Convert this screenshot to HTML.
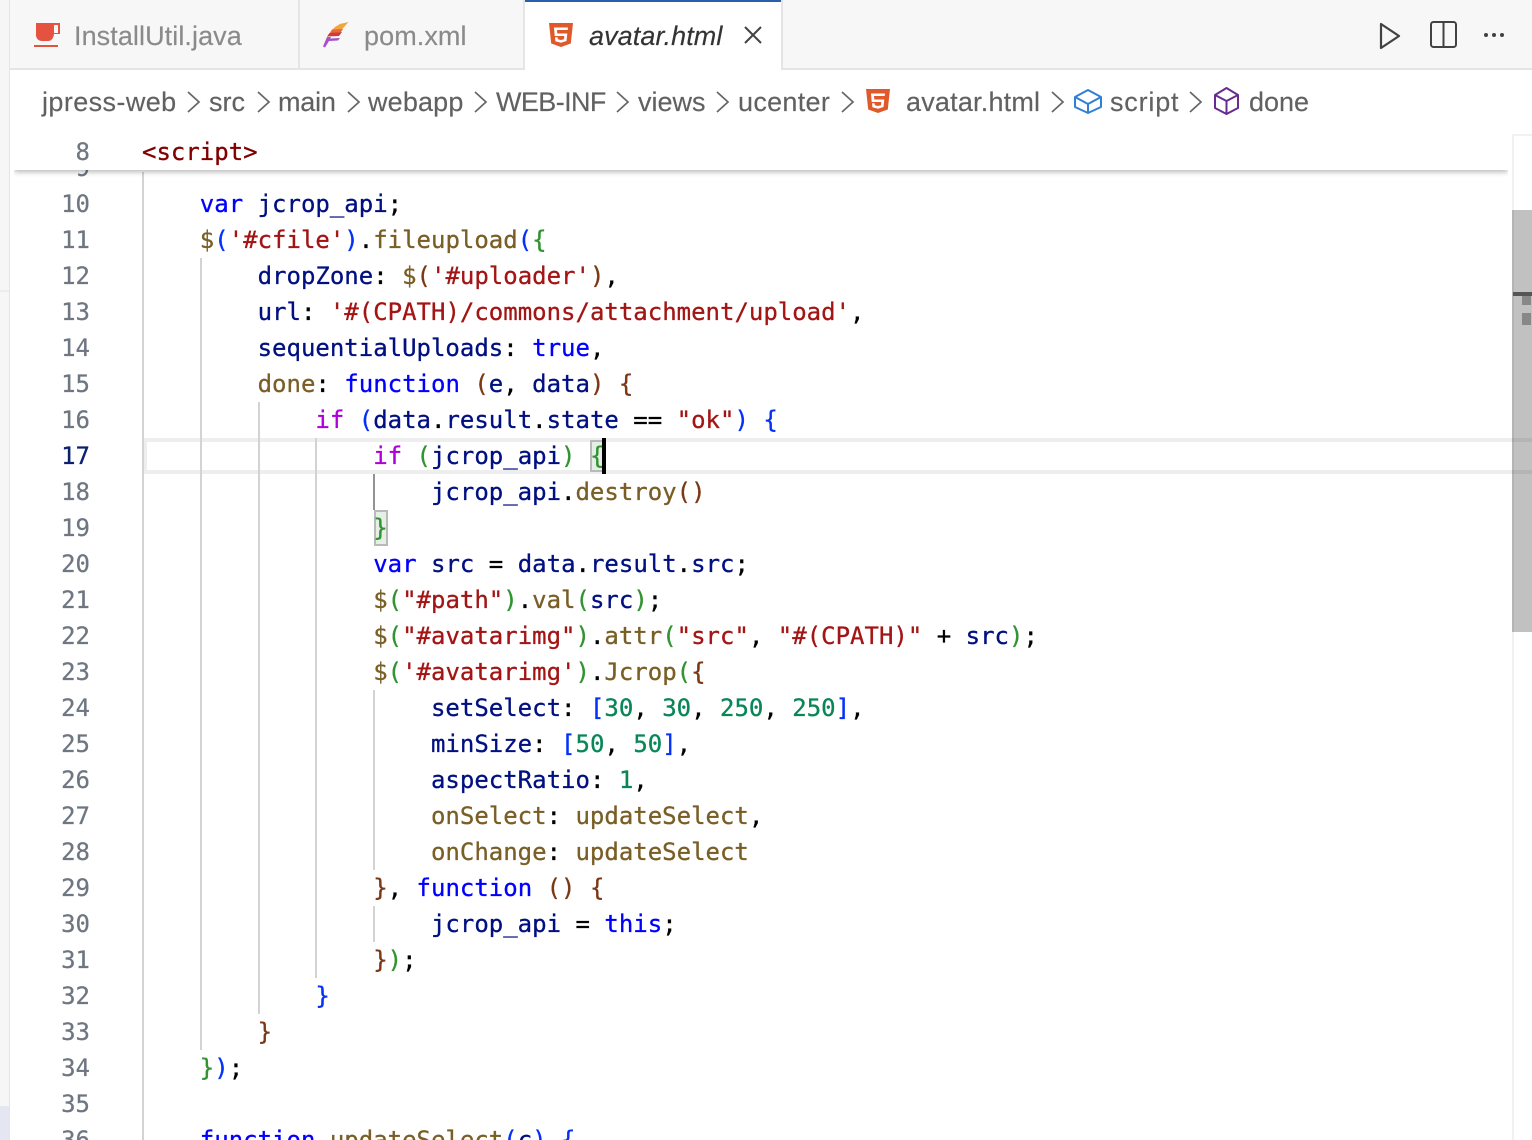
<!DOCTYPE html>
<html><head><meta charset="utf-8"><style>
html,body{margin:0;padding:0;width:1532px;height:1140px;overflow:hidden;background:#fff}
body{position:relative}
.a{position:absolute}
.ui{position:absolute;font-family:"Liberation Sans",sans-serif;font-size:27px;line-height:36px;white-space:nowrap;-webkit-text-stroke:.15px currentColor}
.bc{color:#616161;top:84px}
.tb{top:18px;color:#8a8a8a;letter-spacing:.08px}
.ln{position:absolute;left:30px;width:60px;text-align:right;font-family:"DejaVu Sans Mono",monospace;font-size:24px;line-height:36px;color:#6e7681;height:36px;-webkit-text-stroke:.25px currentColor;filter:blur(.25px)}
.c{position:absolute;left:142px;font-family:"DejaVu Sans Mono",monospace;font-size:24px;line-height:36px;height:36px;white-space:pre;color:#000;-webkit-text-stroke:.3px currentColor;filter:blur(.25px)}
.k{color:#00f}.p{color:#af00db}.s{color:#a31515}.f{color:#795e26}.v{color:#001080}.n{color:#098658}.t{color:#800000}
.b1{color:#0431fa}.b2{color:#319331}.b3{color:#7b3814}
.g{position:absolute;width:2px;background:#d3d3d3}
svg{position:absolute;overflow:visible}
</style></head><body>

<!-- left sidebar -->
<div class="a" style="left:0;top:0;width:9px;height:1140px;background:#f6f6f6"></div>
<div class="a" style="left:9px;top:0;width:1px;height:1140px;background:#e5e5e5"></div>
<div class="a" style="left:0;top:290px;width:9px;height:2px;background:#ececec"></div>
<div class="a" style="left:0;top:1106px;width:9px;height:34px;background:#e4e6f1"></div>

<!-- scrollbar -->
<div class="a" style="left:1512px;top:134px;width:20px;height:1006px;background:#fff;border-left:2px solid #f1f1f1;box-sizing:border-box;border-top:2px solid #f1f1f1"></div>
<div class="a" style="left:1512px;top:210px;width:20px;height:422px;background:#c1c1c1;border-left:2px solid #b4b4b4;box-sizing:border-box"></div>

<!-- current line -->
<div class="a" style="left:144px;top:438px;width:1388px;height:36px;box-sizing:border-box;border:4px solid #eeeeee;border-left-width:3px;border-right:0;mix-blend-mode:multiply"></div>

<!-- bracket highlights -->
<div class="a" style="left:590px;top:440px;width:14px;height:32px;box-sizing:border-box;background:#e6efe6;border:2px solid #b9b9b9"></div>
<div class="a" style="left:374px;top:510px;width:14px;height:36px;box-sizing:border-box;background:#e6efe6;border:2px solid #b9b9b9"></div>

<!-- indent guides -->
<div class="g" style="left:142px;top:172px;height:968px"></div>
<div class="g" style="left:200px;top:258px;height:792px"></div>
<div class="g" style="left:258px;top:402px;height:612px"></div>
<div class="g" style="left:315px;top:438px;height:540px"></div>
<div class="g" style="left:373px;top:474px;height:36px;background:#939393"></div>
<div class="g" style="left:373px;top:690px;height:180px"></div>
<div class="g" style="left:373px;top:906px;height:36px"></div>

<!-- scrollbar marks -->
<div class="a" style="left:1513px;top:292px;width:19px;height:4px;background:#555"></div>
<div class="a" style="left:1522px;top:296px;width:9px;height:9px;background:#888"></div>
<div class="a" style="left:1522px;top:313px;width:9px;height:12px;background:#888"></div>

<!-- line numbers -->
<div class="ln" style="top:150px">9</div>
<div class="ln" style="top:186px">10</div>
<div class="ln" style="top:222px">11</div>
<div class="ln" style="top:258px">12</div>
<div class="ln" style="top:294px">13</div>
<div class="ln" style="top:330px">14</div>
<div class="ln" style="top:366px">15</div>
<div class="ln" style="top:402px">16</div>
<div class="ln" style="top:438px;color:#0b216f">17</div>
<div class="ln" style="top:474px">18</div>
<div class="ln" style="top:510px">19</div>
<div class="ln" style="top:546px">20</div>
<div class="ln" style="top:582px">21</div>
<div class="ln" style="top:618px">22</div>
<div class="ln" style="top:654px">23</div>
<div class="ln" style="top:690px">24</div>
<div class="ln" style="top:726px">25</div>
<div class="ln" style="top:762px">26</div>
<div class="ln" style="top:798px">27</div>
<div class="ln" style="top:834px">28</div>
<div class="ln" style="top:870px">29</div>
<div class="ln" style="top:906px">30</div>
<div class="ln" style="top:942px">31</div>
<div class="ln" style="top:978px">32</div>
<div class="ln" style="top:1014px">33</div>
<div class="ln" style="top:1050px">34</div>
<div class="ln" style="top:1086px">35</div>
<div class="ln" style="top:1122px">36</div>

<!-- code -->
<div class="c" style="top:186px">    <span class="k">var</span> <span class="v">jcrop_api</span>;</div>
<div class="c" style="top:222px">    <span class="f">$</span><span class="b1">(</span><span class="s">'#cfile'</span><span class="b1">)</span>.<span class="f">fileupload</span><span class="b1">(</span><span class="b2">{</span></div>
<div class="c" style="top:258px">        <span class="v">dropZone</span>: <span class="f">$</span><span class="b3">(</span><span class="s">'#uploader'</span><span class="b3">)</span>,</div>
<div class="c" style="top:294px">        <span class="v">url</span>: <span class="s">'#(CPATH)/commons/attachment/upload'</span>,</div>
<div class="c" style="top:330px">        <span class="v">sequentialUploads</span>: <span class="k">true</span>,</div>
<div class="c" style="top:366px">        <span class="f">done</span>: <span class="k">function</span> <span class="b3">(</span><span class="v">e</span>, <span class="v">data</span><span class="b3">)</span> <span class="b3">{</span></div>
<div class="c" style="top:402px">            <span class="p">if</span> <span class="b1">(</span><span class="v">data</span>.<span class="v">result</span>.<span class="v">state</span> == <span class="s">"ok"</span><span class="b1">)</span> <span class="b1">{</span></div>
<div class="c" style="top:438px">                <span class="p">if</span> <span class="b2">(</span><span class="v">jcrop_api</span><span class="b2">)</span> <span class="b2">{</span></div>
<div class="c" style="top:474px">                    <span class="v">jcrop_api</span>.<span class="f">destroy</span><span class="b3">()</span></div>
<div class="c" style="top:510px">                <span class="b2">}</span></div>
<div class="c" style="top:546px">                <span class="k">var</span> <span class="v">src</span> = <span class="v">data</span>.<span class="v">result</span>.<span class="v">src</span>;</div>
<div class="c" style="top:582px">                <span class="f">$</span><span class="b2">(</span><span class="s">"#path"</span><span class="b2">)</span>.<span class="f">val</span><span class="b2">(</span><span class="v">src</span><span class="b2">)</span>;</div>
<div class="c" style="top:618px">                <span class="f">$</span><span class="b2">(</span><span class="s">"#avatarimg"</span><span class="b2">)</span>.<span class="f">attr</span><span class="b2">(</span><span class="s">"src"</span>, <span class="s">"#(CPATH)"</span> + <span class="v">src</span><span class="b2">)</span>;</div>
<div class="c" style="top:654px">                <span class="f">$</span><span class="b2">(</span><span class="s">'#avatarimg'</span><span class="b2">)</span>.<span class="f">Jcrop</span><span class="b2">(</span><span class="b3">{</span></div>
<div class="c" style="top:690px">                    <span class="v">setSelect</span>: <span class="b1">[</span><span class="n">30</span>, <span class="n">30</span>, <span class="n">250</span>, <span class="n">250</span><span class="b1">]</span>,</div>
<div class="c" style="top:726px">                    <span class="v">minSize</span>: <span class="b1">[</span><span class="n">50</span>, <span class="n">50</span><span class="b1">]</span>,</div>
<div class="c" style="top:762px">                    <span class="v">aspectRatio</span>: <span class="n">1</span>,</div>
<div class="c" style="top:798px">                    <span class="f">onSelect</span>: <span class="f">updateSelect</span>,</div>
<div class="c" style="top:834px">                    <span class="f">onChange</span>: <span class="f">updateSelect</span></div>
<div class="c" style="top:870px">                <span class="b3">}</span>, <span class="k">function</span> <span class="b3">()</span> <span class="b3">{</span></div>
<div class="c" style="top:906px">                    <span class="v">jcrop_api</span> = <span class="k">this</span>;</div>
<div class="c" style="top:942px">                <span class="b3">}</span><span class="b2">)</span>;</div>
<div class="c" style="top:978px">            <span class="b1">}</span></div>
<div class="c" style="top:1014px">        <span class="b3">}</span></div>
<div class="c" style="top:1050px">    <span class="b2">}</span><span class="b1">)</span>;</div>
<div class="c" style="top:1122px">    <span class="k">function</span> <span class="f">updateSelect</span><span class="b1">(</span><span class="v">c</span><span class="b1">)</span> <span class="b1">{</span></div>

<!-- cursor -->
<div class="a" style="left:602px;top:438px;width:4px;height:36px;background:#000"></div>

<!-- sticky scroll + breadcrumbs -->
<div class="a" style="left:10px;top:70px;width:1502px;height:100px;background:#fff"></div>
<div class="a" style="left:14px;top:150px;width:1494px;height:20px;background:#fff;box-shadow:0 2px 5px rgba(0,0,0,.28);clip-path:inset(0 0 -12px 0)"></div>
<div class="ln" style="top:134px;color:#6e7681">8</div>
<div class="c" style="top:134px;color:#800000">&lt;script&gt;</div>

<!-- tab bar -->
<div class="a" style="left:10px;top:0;width:1522px;height:68px;background:#f7f7f7"></div>
<div class="a" style="left:10px;top:68px;width:1522px;height:2px;background:#e5e5e5"></div>
<div class="a" style="left:298px;top:0;width:2px;height:68px;background:#e5e5e5"></div>
<div class="a" style="left:523px;top:0;width:2px;height:68px;background:#e5e5e5"></div>
<div class="a" style="left:781px;top:0;width:2px;height:68px;background:#e5e5e5"></div>
<div class="a" style="left:525px;top:0;width:256px;height:70px;background:#fff"></div>
<div class="a" style="left:525px;top:0;width:256px;height:2px;background:#2a5fb0"></div>

<!-- java icon -->
<svg style="left:0;top:0" width="80" height="60"><path fill="#e65240" d="M36 23h24v11h-6c-.5 4-2.500 7-6 7h-6c-3.500 0-6-2.500-6-6z"/><rect x="54" y="25" width="4" height="8" fill="#f7f7f7"/><rect x="34" y="45" width="24" height="2" fill="#e65240"/></svg>
<div class="ui tb" style="left:74px">InstallUtil.java</div>

<!-- feather icon -->
<svg style="left:0;top:0" width="360" height="60">
<path fill="#f2a53c" d="M348.500 22L340 24l-5 3-3 3 10-.5 3-3.500z"/>
<path fill="#e8683c" d="M332 29.500l11-.5-2 3-11.500 1.500z"/>
<path fill="#cf3a3a" d="M329.500 33l12.500-1-3 4-12 .5z"/>
<path fill="#a850c8" d="M327 37h4l-1 1.500 10-.5-2 2.500-9 .5-4 6.500-2-1z"/>
</svg>
<div class="ui tb" style="left:364px">pom.xml</div>

<!-- html icon tab -->
<svg style="left:549px;top:23px" width="24" height="24" viewBox="0 0 24 24"><path fill="#e0592a" d="M0 0h24l-2.200 20.500L12 24 2.200 20.500z"/><path fill="#fff" d="M5 4.500h14l-.3 2.500H8l.3 3.500h10l-.8 7.500L12 19.800l-5.600-1.500-.4-4h2.600l.2 2L12 17l3-.7.300-3.300H5.700z"/></svg>
<div class="ui" style="left:589px;top:18px;color:#333;font-style:italic;letter-spacing:.08px">avatar.html</div>
<svg style="left:744px;top:26px" width="18" height="18"><path d="M1 1l16 16M17 1L1 17" stroke="#424242" stroke-width="2" fill="none"/></svg>

<!-- top right actions -->
<svg style="left:1379px;top:22px" width="22" height="28"><path d="M2 2l18 12L2 26z" stroke="#424242" stroke-width="2.200" fill="none" stroke-linejoin="round"/></svg>
<svg style="left:1430px;top:21px" width="28" height="28"><rect x="1" y="1" width="25" height="25" rx="2.500" stroke="#424242" stroke-width="2" fill="none"/><path d="M13.500 1v25" stroke="#424242" stroke-width="2"/></svg>
<svg style="left:1483px;top:31px" width="24" height="8"><circle cx="3" cy="4" r="2" fill="#424242"/><circle cx="11" cy="4" r="2" fill="#424242"/><circle cx="19" cy="4" r="2" fill="#424242"/></svg>

<!-- breadcrumbs -->
<div class="ui bc" style="left:42px;letter-spacing:.4px">jpress-web</div>
<div class="ui bc" style="left:209px">src</div>
<div class="ui bc" style="left:278px;letter-spacing:-.2px">main</div>
<div class="ui bc" style="left:368px;letter-spacing:.15px">webapp</div>
<div class="ui bc" style="left:496px;letter-spacing:-.6px">WEB-INF</div>
<div class="ui bc" style="left:638px">views</div>
<div class="ui bc" style="left:738px;letter-spacing:.3px">ucenter</div>
<div class="ui bc" style="left:906px;letter-spacing:.2px">avatar.html</div>
<div class="ui bc" style="left:1110px;letter-spacing:.8px">script</div>
<div class="ui bc" style="left:1249px">done</div>

<svg style="left:0;top:0" width="1300" height="120" fill="none" stroke="#666" stroke-width="1.700">
<path d="M188 92l11 10-11 10"/>
<path d="M258 92l11 10-11 10"/>
<path d="M348 92l11 10-11 10"/>
<path d="M475 92l11 10-11 10"/>
<path d="M617 92l11 10-11 10"/>
<path d="M717 92l11 10-11 10"/>
<path d="M842 92l11 10-11 10"/>
<path d="M1052 92l11 10-11 10"/>
<path d="M1190 92l11 10-11 10"/>
</svg>

<svg style="left:866px;top:89px" width="24" height="24" viewBox="0 0 24 24"><path fill="#e0592a" d="M0 0h24l-2.200 20.500L12 24 2.200 20.500z"/><path fill="#fff" d="M5 4.500h14l-.3 2.500H8l.3 3.500h10l-.8 7.500L12 19.800l-5.600-1.500-.4-4h2.600l.2 2L12 17l3-.7.300-3.300H5.700z"/></svg>

<svg style="left:1074px;top:89px" width="28" height="26" fill="none" stroke="#2f7fd6" stroke-width="2" stroke-linejoin="round"><path d="M14 1l13 7v10l-13 6-13-6V8z"/><path d="M1 8l13 7 13-7M14 15v9"/></svg>

<svg style="left:1214px;top:87px" width="26" height="28" fill="none" stroke="#652d90" stroke-width="2" stroke-linejoin="round"><path d="M12.500 1L24 8v13l-11.500 6L1 21V8z"/><path d="M1 8l11.500 6L24 8M12.500 14v13"/></svg>

</body></html>
